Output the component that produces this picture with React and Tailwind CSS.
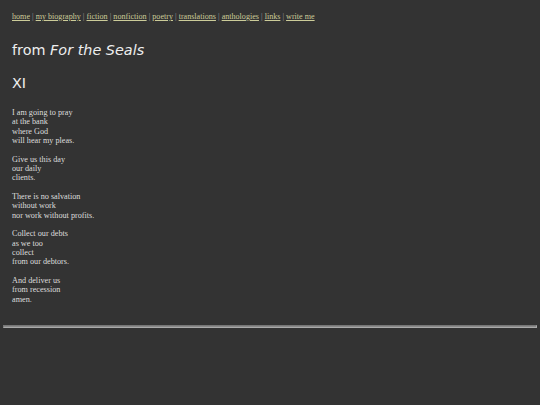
import React from 'react';

const links = ['home', 'my biography', 'fiction', 'nonfiction', 'poetry', 'translations', 'anthologies', 'links', 'write me'];

const stanzas = [
  ['I am going to pray', 'at the bank', 'where God', 'will hear my pleas.'],
  ['Give us this day', 'our daily', 'clients.'],
  ['There is no salvation', 'without work', 'nor work without profits.'],
  ['Collect our debts', 'as we too', 'collect', 'from our debtors.'],
  ['And deliver us', 'from recession', 'amen.'],
];

const App = () => {
  return (
    <div className="min-h-[405px] bg-[#333333] text-[#dddddd] font-['Liberation_Serif',serif] overflow-hidden">
      <div className="px-3 pt-[12px]">
        {/* nav */}
        <p className="text-[8.1px] leading-[10px] text-[#999999]">
          {links.map((l, i) => (
            <React.Fragment key={l}>
              <a href="#" className="text-[#cccc99] underline">{l}</a>
              {i < links.length - 1 && ' | '}
            </React.Fragment>
          ))}
        </p>

        <h1 className="mt-[18px] text-[14.4px] leading-[20px] font-['DejaVu_Sans',sans-serif] text-[#eeeeee]">
          from <em>For the Seals</em>
        </h1>
        <h2 className="mt-[13px] text-[14.4px] leading-[20px] font-['DejaVu_Sans',sans-serif] text-[#eeeeee]">XI</h2>

        <div className="mt-[15px] flex flex-col gap-[9.5px] text-[8.2px] leading-[9.3px]">
          {stanzas.map((s, i) => (
            <p key={i}>
              {s.map((line, j) => (
                <React.Fragment key={j}>
                  {line}
                  <br />
                </React.Fragment>
              ))}
            </p>
          ))}
        </div>
      </div>
      <div className="mx-[3px] mt-[21px] h-[3px] border border-t-[#777777] border-l-[#777777] border-b-[#aaaaaa] border-r-[#aaaaaa] bg-[#888888]" />
    </div>
  );
};

export default App;
